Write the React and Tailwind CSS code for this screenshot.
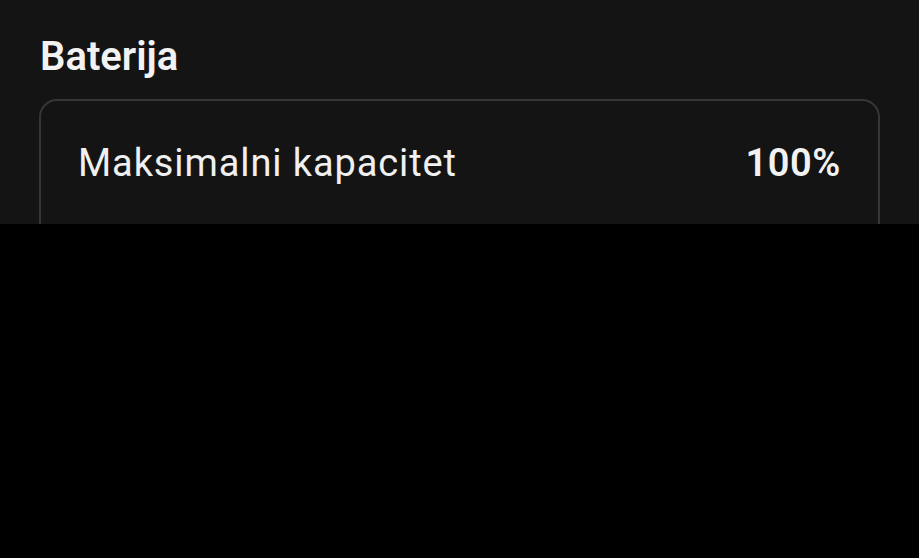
export default function App() {
  return (
    <div className="w-[919px] h-[558px] bg-black" style={{ fontFamily: 'Roboto, "Noto Sans", sans-serif' }}>
      <div className="h-[224px] overflow-hidden bg-[#141414] px-[39px]">
        <div className="h-[99px] pt-[32px] pl-[1px]">
          <h1 className="text-[40px] leading-[50px] font-semibold text-[#f2f2f2]">Baterija</h1>
        </div>
        <div className="h-[200px] rounded-[18px] border-[2px] border-[#363636] px-[37px]">
          <div className="flex items-center justify-between h-[124px]">
            <span className="text-[38px] text-[#f0f0f0] tracking-[0.9px]">Maksimalni kapacitet</span>
            <span className="text-[38px] font-semibold text-[#f2f2f2] tracking-[0.6px]">100%</span>
          </div>
        </div>
      </div>
    </div>
  );
}
